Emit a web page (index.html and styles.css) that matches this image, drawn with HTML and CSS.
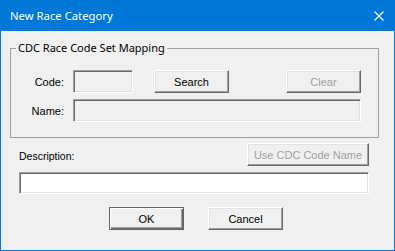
FILE: index.html
```html
<!DOCTYPE html>
<html lang="en">
<head>
    <meta charset="UTF-8">
    <title>New Race Category</title>
    <link rel="stylesheet" href="styles.css">
</head>
<body>

    <div class="window">
        <div class="titlebar">
            <span class="title">New Race Category</span>
            <svg class="close-icon" width="10" height="10" viewBox="0 0 10 10">
                <path d="M0.5 0.5 L9.5 9.5 M9.5 0.5 L0.5 9.5" stroke="#fff" stroke-width="1.1" fill="none"/>
            </svg>
        </div>

        <div class="dialog-body">
            <!-- CDC mapping group -->
            <fieldset class="group">
                <legend>CDC Race Code Set Mapping</legend>
                <div class="row row-code">
                    <label class="row-label">Code:</label>
                    <div class="field field-disabled code-field"></div>
                    <button class="btn search-btn">Search</button>
                    <button class="btn btn-disabled clear-btn">Clear</button>
                </div>
                <div class="row row-name">
                    <label class="row-label">Name:</label>
                    <div class="field field-disabled name-field"></div>
                </div>
            </fieldset>

            <div class="desc-head">
                <label class="desc-label">Description:</label>
                <button class="btn btn-disabled use-name-btn">Use CDC Code Name</button>
            </div>
            <div class="field desc-field"></div>

            <div class="actions">
                <button class="btn btn-default">OK</button>
                <button class="btn">Cancel</button>
            </div>
        </div>
    </div>

</body>
</html>
```

FILE: styles.css
```css
:root {
    --title-blue: #0078d7;
    --face: #f0f0f0;
    --light: #e3e3e3;
    --shadow: #a0a0a0;
    --dark-shadow: #696969;
    --text: #000000;
}
body {
    margin: 0;
    font-family: 'Liberation Sans', Arial, sans-serif;
    font-size: 11px;
    color: var(--text);
    background: var(--face);
}
.window {
    width: 395px; height: 251px; box-sizing: border-box;
    border: 1px solid var(--title-blue); border-top: none;
    background: var(--face);
}

/* Title bar */
.titlebar {
    height: 31px; margin: 0 -1px; padding: 0 11px 0 10px;
    display: flex; align-items: center; justify-content: space-between;
    background: var(--title-blue);
}
.title {
    font-family: 'Noto Sans', sans-serif; font-size: 11.3px; color: #fff;
    margin-top: -1px;
}
.close-icon { display: block; }

/* Body */
.dialog-body { padding-top: 10px; }

.group {
    width: 369px; min-width: 0; box-sizing: border-box;
    margin: 0 0 0 9px; padding: 0 0 15px 0;
    border: 1px solid var(--shadow);
}
.group legend {
    margin-left: 5px; padding: 0 2px;
    font-family: 'Noto Sans', sans-serif; font-size: 11px; line-height: 14px;
}

.row { display: flex; align-items: center; }
.row-code { margin-top: 15px; }
.row-name { margin-top: 6px; }
.row-label { width: 53px; margin-right: 9px; text-align: right; }

/* Sunken text boxes */
.field {
    box-sizing: border-box; height: 23px;
    border: 1px solid; border-color: var(--shadow) #fff #fff var(--shadow);
    box-shadow: inset 1px 1px var(--dark-shadow), inset -1px -1px var(--light);
    background: #fff;
}
.field-disabled { background: var(--face); }
.code-field { width: 60px; }
.name-field { width: 288px; }

/* Raised buttons */
.btn {
    box-sizing: border-box; width: 75px; height: 23px; padding: 0;
    font-family: 'Liberation Sans', Arial, sans-serif; font-size: 11px; color: var(--text);
    background: var(--face);
    border: 1px solid; border-color: #fff var(--dark-shadow) var(--dark-shadow) #fff;
    box-shadow: inset -1px -1px var(--shadow), inset 1px 1px var(--light);
}
.btn-disabled { color: var(--shadow); }
.btn-default {
    border: 1px solid #646464;
    box-shadow: inset 1px 1px #fff, inset -1px -1px var(--dark-shadow), inset -2px -2px var(--shadow);
}
.search-btn { margin-left: 21px; }
.clear-btn { margin-left: 57px; }

.desc-head {
    display: flex; justify-content: space-between; align-items: flex-end;
    margin-top: 5px; padding: 0 25px 0 18px;
}
.desc-label { font-size: 10.5px; line-height: 14px; margin-bottom: 3px; }
.use-name-btn { width: 122px; }

.desc-field { height: 22px; margin: 6px 25px 0 18px; }

.actions { display: flex; gap: 24px; margin-top: 13px; padding-left: 108px; }
```
